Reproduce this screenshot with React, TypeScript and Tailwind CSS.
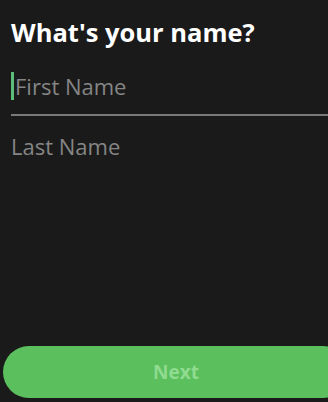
import React from 'react';

export default function App() {
  return (
    <div
      className="w-[328px] h-[402px] overflow-hidden bg-[#1a1a1a] flex flex-col"
      style={{ fontFamily: '"Open Sans", "Liberation Sans", sans-serif' }}
    >
      {/* Title */}
      <h1 className="pl-[11px] pt-[16px] text-[25.5px] leading-[32px] font-bold text-white">
        What&apos;s your name?
      </h1>

      {/* First name */}
      <div className="ml-[11px] mt-[24px] border-b-2 border-[#7a7a7a] pb-[14px] flex items-center">
        <span className="w-[3px] h-[28px] bg-[#5bbf7a] mr-[1px]" />
        <span className="text-[22px] leading-[28px] text-[#858585]">First Name</span>
      </div>

      {/* Last name */}
      <div className="ml-[11px] mt-[16px] flex items-center">
        <span className="text-[22px] leading-[28px] text-[#858585]">Last Name</span>
      </div>

      <div className="flex-1" />

      {/* Next */}
      <button className="ml-[3px] mb-[4px] w-[346px] h-[52px] shrink-0 rounded-full bg-[#5bbf5e] text-[#8fdb8f] text-[19px] font-bold">
        Next
      </button>
    </div>
  );
}
